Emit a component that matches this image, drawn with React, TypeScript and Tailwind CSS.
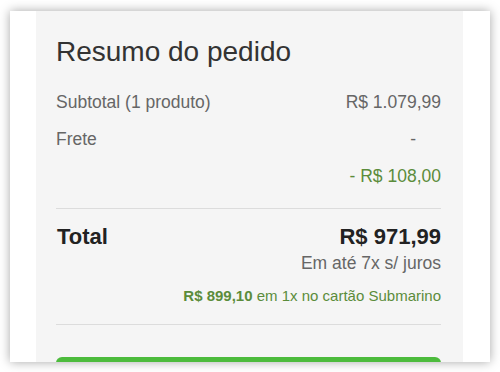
const rows = [
  { label: "Subtotal (1 produto)", value: "R$ 1.079,99", kind: "plain" },
  { label: "Frete", value: "-", kind: "dash" },
  { label: "", value: "- R$ 108,00", kind: "green" },
];

export default function App() {
  return (
    <div
      className="w-[500px] h-[372px] bg-white overflow-hidden pt-[11px] px-[10px]"
      style={{ fontFamily: '"Liberation Sans", Arial, sans-serif' }}
    >
      <div className="h-[351px] bg-white shadow-[0_0_10px_rgba(0,0,0,0.35)] overflow-hidden flex">
        <div className="ml-[26px] mr-[27px] flex-1 bg-[#f5f5f5] pl-[20px] pr-[22px] pt-[25px]">
          <h2 className="text-[28px] leading-[32px] text-[#333]">Resumo do pedido</h2>

          <div className="mt-[22px] flex flex-col gap-[13px]">
            {rows.map((r, i) => (
              <div key={i} className="flex justify-between text-[17.5px] leading-[24px]">
                <span className="text-[#666]">{r.label}</span>
                <span
                  className={
                    r.kind === "green"
                      ? "text-[#5b8c3b]"
                      : r.kind === "dash"
                        ? "text-[#666] pr-[25px]"
                        : "text-[#666]"
                  }
                >
                  {r.value}
                </span>
              </div>
            ))}
          </div>

          <div className="mt-[20px] border-t border-[#dcdcdc]" />

          <div className="mt-[14px] flex justify-between items-baseline text-[22px] leading-[28px] font-bold text-[#222]">
            <span className="pl-px">Total</span>
            <span>R$ 971,99</span>
          </div>
          <div className="text-right text-[17.5px] leading-[24px] text-[#666]">Em até 7x s/ juros</div>
          <div className="mt-[11px] text-right text-[15px] leading-[20px] text-[#5b8c3b]">
            <span className="font-bold">R$ 899,10</span> em 1x no cartão Submarino
          </div>

          <div className="mt-[18px] border-t border-[#dcdcdc]" />

          <button className="mt-[32px] w-full h-[44px] rounded-[6px] bg-[#4cbb3c]" />
        </div>
      </div>
    </div>
  );
}
